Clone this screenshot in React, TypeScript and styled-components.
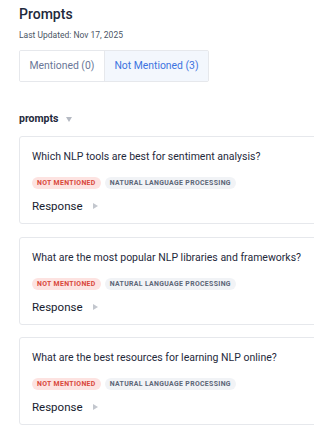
import * as React from "react";
import styled, { createGlobalStyle } from "styled-components";

const GlobalStyle = createGlobalStyle`
  html, body {
    margin: 0;
    padding: 0;
    background: #ffffff;
  }
  body {
    font-family: Roboto, "Liberation Sans", Arial, sans-serif;
    color: #1f2a3c;
    overflow: hidden;
  }
`;

const Page = styled.div`
  width: 314px;
  height: 435px;
  padding: 5px 0 0 19px;
  box-sizing: border-box;
  overflow: hidden;
`;

const Title = styled.h2`
  margin: 0;
  font-size: 14px;
  font-weight: 500;
  line-height: 18px;
  color: #1f2a3c;
`;

const Updated = styled.div`
  margin-top: 6px;
  font-size: 8.5px;
  line-height: 12px;
  color: #4b5565;
`;

const Tabs = styled.div`
  display: inline-flex;
  margin-top: 9px;
  border: 1px solid #e6e8ec;
  border-radius: 2px;
  overflow: hidden;
`;

const Tab = styled.button<{ $active?: boolean }>`
  font-family: inherit;
  font-size: 10.4px;
  line-height: 12px;
  height: 30px;
  padding: 0 9.5px;
  border: none;
  border-left: ${(p) => (p.$active ? "1px solid #e6e8ec" : "none")};
  background: ${(p) => (p.$active ? "#f3f7fd" : "#ffffff")};
  color: ${(p) => (p.$active ? "#3d74e0" : "#6a7797")};
  cursor: pointer;
`;

const SectionHeader = styled.div`
  display: flex;
  align-items: center;
  gap: 8px;
  margin-top: 30px;
  font-size: 10.5px;
  font-weight: 700;
  line-height: 14px;
  color: #1f2a3c;
`;

const Caret = styled.span<{ $dir: "down" | "right" }>`
  width: 0;
  height: 0;
  border-style: solid;
  ${(p) =>
    p.$dir === "down"
      ? "border-width: 5px 3.5px 0 3.5px; border-color: #b5bac3 transparent transparent transparent;"
      : "border-width: 3.5px 0 3.5px 5px; border-color: transparent transparent transparent #c3c7ce;"}
`;

const List = styled.div`
  display: flex;
  flex-direction: column;
  gap: 12.5px;
  margin-top: 10px;
  width: 310px;
`;

const Card = styled.div`
  border: 1px solid #e6e8ec;
  border-radius: 3px;
  padding: 13px 12px 10px 12px;
  height: 88px;
  box-sizing: border-box;
`;

const Question = styled.div`
  font-size: 10.5px;
  line-height: 14px;
  color: #1f2a3c;
  white-space: nowrap;
`;

const TagRow = styled.div`
  display: flex;
  gap: 4px;
  margin-top: 13px;
`;

const Tag = styled.span<{ $tone: "red" | "gray" }>`
  display: inline-flex;
  align-items: center;
  height: 12px;
  padding: 0 5px;
  border-radius: 6px;
  font-size: 6.9px;
  font-weight: 700;
  letter-spacing: 0.35px;
  text-transform: uppercase;
  background: ${(p) => (p.$tone === "red" ? "#fde3e1" : "#f1f3f6")};
  color: ${(p) => (p.$tone === "red" ? "#d8473a" : "#5c6677")};
`;

const ResponseRow = styled.div`
  display: flex;
  align-items: center;
  gap: 10px;
  margin-top: 10px;
  font-size: 11.5px;
  font-weight: 400;
  line-height: 14px;
  color: #17212f;
`;

const prompts = [
  "Which NLP tools are best for sentiment analysis?",
  "What are the most popular NLP libraries and frameworks?",
  "What are the best resources for learning NLP online?",
];

const PromptCard: React.FunctionComponent<{ text: string }> = ({ text }) => (
  <Card>
    <Question>{text}</Question>
    <TagRow>
      <Tag $tone="red">Not Mentioned</Tag>
      <Tag $tone="gray">Natural Language Processing</Tag>
    </TagRow>
    <ResponseRow>
      Response <Caret $dir="right" />
    </ResponseRow>
  </Card>
);

const App: React.FunctionComponent = () => (
  <>
    <GlobalStyle />
    <Page>
      <Title>Prompts</Title>
      <Updated>Last Updated: Nov 17, 2025</Updated>
      <Tabs>
        <Tab>Mentioned (0)</Tab>
        <Tab $active>Not Mentioned (3)</Tab>
      </Tabs>
      <SectionHeader>
        prompts <Caret $dir="down" />
      </SectionHeader>
      <List>
        {prompts.map((p) => (
          <PromptCard key={p} text={p} />
        ))}
      </List>
    </Page>
  </>
);

export default App;
